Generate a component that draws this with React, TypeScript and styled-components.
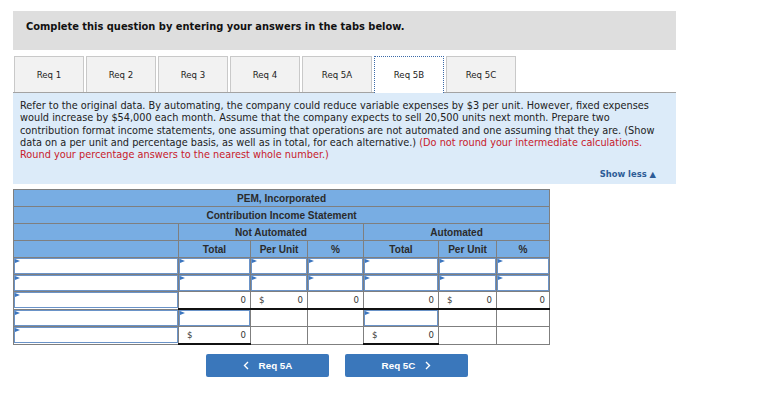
import { FC } from 'react';
import styled, { createGlobalStyle, css } from 'styled-components';

const GlobalStyle = createGlobalStyle`
  body {
    margin: 0;
    background: #fff;
    font-family: "DejaVu Sans", Verdana, sans-serif;
    color: #222;
  }
`;

const Page = styled.div`
  width: 663px;
  padding: 11px 0 0 13px;
`;

const Banner = styled.div`
  height: 39px;
  background: #dedede;
  padding: 10px 0 0 13px;
  box-sizing: border-box;
  font-weight: bold;
  font-size: 9.9px;
  color: #111;
`;

const TabBar = styled.div`
  display: flex;
  gap: 2px;
  margin-top: 6px;
  padding-left: 1px;
  height: 36px;
  border-bottom: 1px solid #a3a3a3;
`;

const Tab = styled.div<{ $active?: boolean }>`
  width: 70px;
  height: 36px;
  box-sizing: border-box;
  display: flex;
  align-items: center;
  justify-content: center;
  font-size: 8.6px;
  color: #222;
  background: #f2f2f2;
  border: 1px solid #c9c9c9;
  border-bottom: none;
  ${(p) => p.$active && css`
    background: #fff;
    height: 37px;
    border: 1px dotted #3b6aa8;
    border-bottom: none;
  `}
`;

const Info = styled.div`
  background: #dcebf9;
  height: 91px;
  box-sizing: border-box;
  padding: 7px 20px 0 7px;
  font-family: "DejaVu Sans Condensed", "DejaVu Sans", sans-serif;
  font-size: 10.85px;
  line-height: 12.3px;
  color: #222;
  white-space: nowrap;
`;

const Red = styled.span`
  color: #c8202b;
`;

const ShowLess = styled.div`
  text-align: right;
  margin-top: 7px;
  font-family: "DejaVu Sans", sans-serif;
  font-weight: bold;
  font-size: 8.4px;
  color: #2d5c96;
`;

const Sheet = styled.table`
  margin-top: 5px;
  border-collapse: collapse;
  table-layout: fixed;
  width: 537px;
  font-family: "Liberation Sans", Arial, sans-serif;
  font-size: 10.1px;
`;

const Head = styled.th`
  background: #78ade3;
  border: 1px solid #7f7f7f;
  height: 16px;
  padding: 0;
  font-weight: bold;
  color: #2b2b2b;
  text-align: center;
`;

const Cell = styled.td<{ $top?: boolean; $under?: boolean }>`
  border: 1px solid #7f7f7f;
  height: 16px;
  padding: 0;
  color: #333;
  vertical-align: middle;
  ${(p) => p.$top && css`border-top: 1px solid #111;`}
  ${(p) => p.$under && css`border-bottom: 2px solid #111;`}
`;

const Field = styled.div`
  position: relative;
  height: 16px;
  box-sizing: border-box;
  border: 1px solid #6a93c8;
  background: #fff;
  &::before {
    content: '';
    position: absolute;
    left: 0;
    top: 0;
    border-style: solid;
    border-width: 2.5px 0 2.5px 5px;
    border-color: transparent transparent transparent #3c76bf;
  }
`;

const Value = styled.div<{ $dollar?: boolean }>`
  display: flex;
  justify-content: space-between;
  padding: 0 4px 0 ${(p) => (p.$dollar ? '8px' : '4px')};
  font-family: "DejaVu Sans", sans-serif;
  font-size: 8.6px;
  line-height: 15px;
`;

const Actions = styled.div`
  display: flex;
  gap: 16px;
  margin: 9px 0 0 193px;
`;

const NavButton = styled.div`
  width: 123px;
  height: 23px;
  border-radius: 2px;
  background: #3a77bb;
  color: #fff;
  display: flex;
  align-items: center;
  justify-content: center;
  gap: 10px;
  font-family: "Liberation Sans", Arial, sans-serif;
  font-weight: bold;
  font-size: 9.8px;
`;

const widths = [165, 72, 57, 56, 75, 58, 53];
const tabs = ['Req 1', 'Req 2', 'Req 3', 'Req 4', 'Req 5A', 'Req 5B', 'Req 5C'];

const Chevron: FC<{ dir: 'left' | 'right' }> = ({ dir }) => (
  <svg width="6" height="9" viewBox="0 0 6 9">
    <path
      d={dir === 'left' ? 'M5 1 L1.5 4.5 L5 8' : 'M1 1 L4.5 4.5 L1 8'}
      fill="none"
      stroke="#fff"
      strokeWidth="1.4"
    />
  </svg>
);

const Num: FC<{ dollar?: boolean }> = ({ dollar }) => (
  <Value $dollar={dollar}>
    <span>{dollar ? '$' : ''}</span>
    <span>0</span>
  </Value>
);

export default function App() {
  return (
    <Page>
      <GlobalStyle />
      <Banner>Complete this question by entering your answers in the tabs below.</Banner>
      <TabBar>
        {tabs.map((t) => (
          <Tab key={t} $active={t === 'Req 5B'}>{t}</Tab>
        ))}
      </TabBar>
      <Info>
        Refer to the original data. By automating, the company could reduce variable expenses by $3 per unit. However, fixed expenses<br />
        would increase by $54,000 each month. Assume that the company expects to sell 20,500 units next month. Prepare two<br />
        contribution format income statements, one assuming that operations are not automated and one assuming that they are. (Show<br />
        data on a per unit and percentage basis, as well as in total, for each alternative.){' '}
        <Red>(Do not round your intermediate calculations.<br />Round your percentage answers to the nearest whole number.)</Red>
        <ShowLess>Show less ▲</ShowLess>
      </Info>
      <Sheet>
        <colgroup>
          {widths.map((w, i) => <col key={i} style={{ width: w }} />)}
        </colgroup>
        <thead>
          <tr><Head colSpan={7}>PEM, Incorporated</Head></tr>
          <tr><Head colSpan={7}>Contribution Income Statement</Head></tr>
          <tr>
            <Head />
            <Head colSpan={3}>Not Automated</Head>
            <Head colSpan={3}>Automated</Head>
          </tr>
          <tr>
            <Head />
            <Head>Total</Head>
            <Head>Per Unit</Head>
            <Head>%</Head>
            <Head>Total</Head>
            <Head>Per Unit</Head>
            <Head>%</Head>
          </tr>
        </thead>
        <tbody>
          {[0, 1].map((r) => (
            <tr key={r}>
              {widths.map((_, i) => <Cell key={i}><Field /></Cell>)}
            </tr>
          ))}
          <tr>
            <Cell><Field /></Cell>
            <Cell $top $under><Num /></Cell>
            <Cell $top $under><Num dollar /></Cell>
            <Cell $top $under><Num /></Cell>
            <Cell $top $under><Num /></Cell>
            <Cell $top $under><Num dollar /></Cell>
            <Cell $top $under><Num /></Cell>
          </tr>
          <tr>
            <Cell><Field /></Cell>
            <Cell><Field /></Cell>
            <Cell />
            <Cell />
            <Cell><Field /></Cell>
            <Cell />
            <Cell />
          </tr>
          <tr>
            <Cell><Field /></Cell>
            <Cell $top $under><Num dollar /></Cell>
            <Cell />
            <Cell />
            <Cell $top $under><Num dollar /></Cell>
            <Cell />
            <Cell />
          </tr>
        </tbody>
      </Sheet>
      <Actions>
        <NavButton><Chevron dir="left" />Req 5A</NavButton>
        <NavButton>Req 5C<Chevron dir="right" /></NavButton>
      </Actions>
    </Page>
  );
}
